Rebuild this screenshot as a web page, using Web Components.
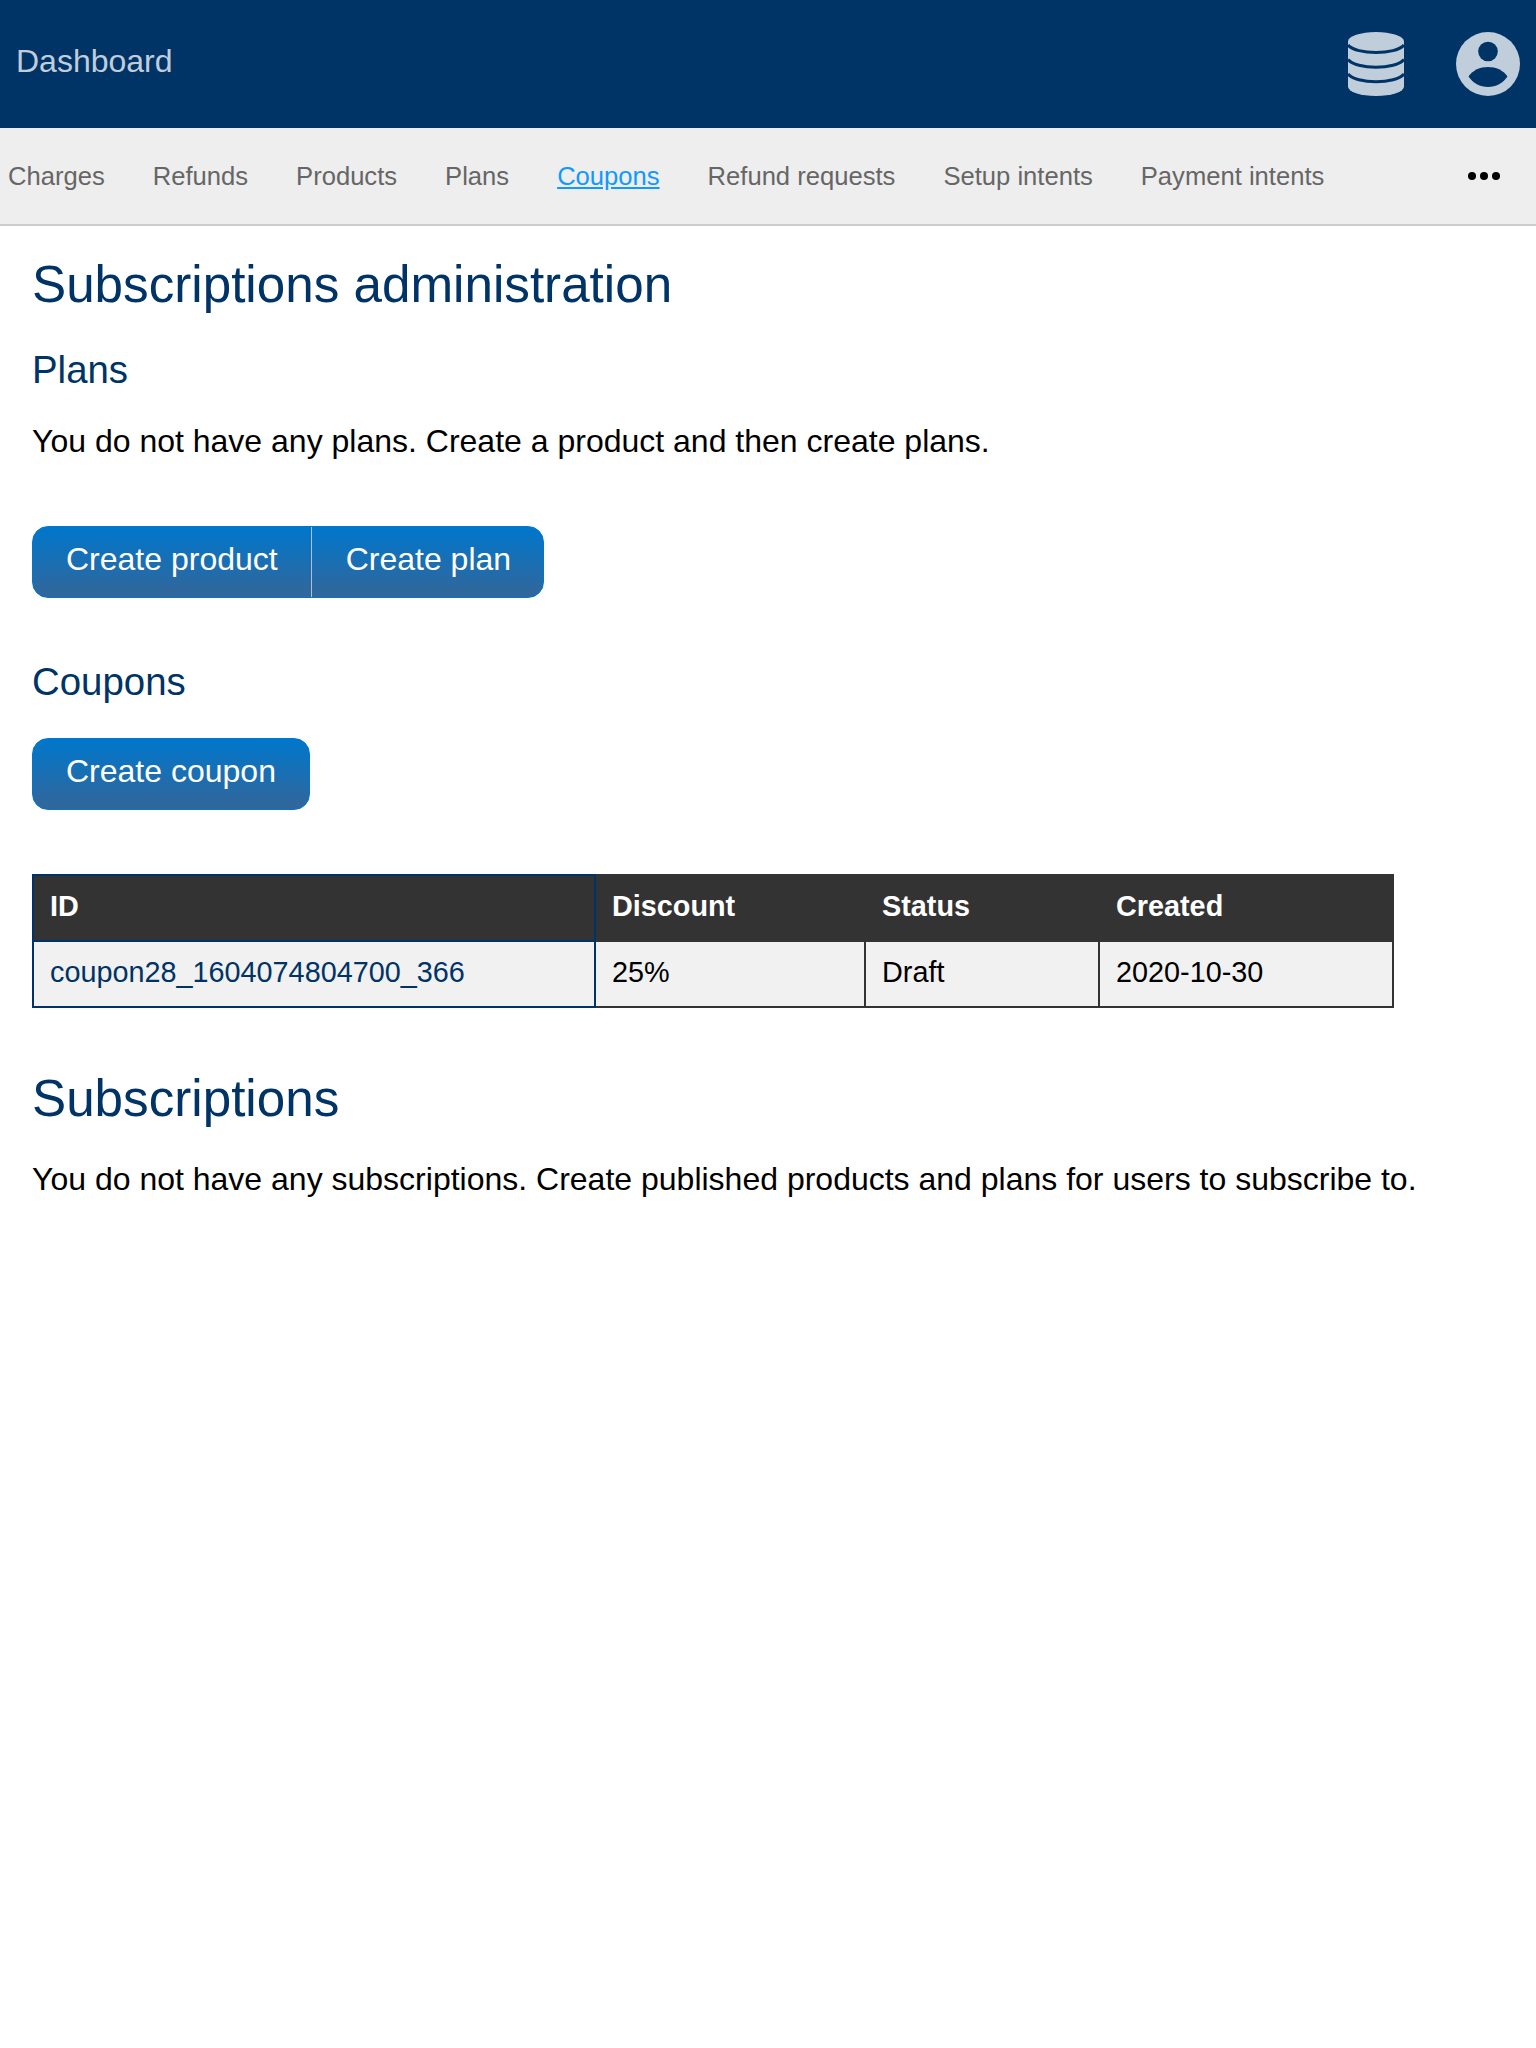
<!DOCTYPE html>
<html lang="en">
<head>
<meta charset="utf-8">
<title>Subscriptions administration</title>
<style>
  html, body { margin: 0; background: #fff; }
  body { font-family: "Liberation Sans", Arial, sans-serif; }
</style>
</head>
<body>
<admin-app></admin-app>
<script>
class TopBar extends HTMLElement {
  constructor() {
    super();
    this.attachShadow({ mode: 'open' });
  }

  connectedCallback() {
    this.shadowRoot.innerHTML = `
      <style>
        :host {
          display: flex;
          align-items: center;
          height: 128px;
          background: #003366;
          color: #bfccd9;
          padding: 0 16px;
          box-sizing: border-box;
        }
        .title { font-size: 32px; flex: 1; position: relative; top: -3px; color: #c0cddb; }
        .icons { display: flex; align-items: center; gap: 52px; }
        svg { display: block; fill: #c0cddb; }
      </style>
      <span class="title">Dashboard</span>
      <div class="icons">
        <svg width="56" height="64" viewBox="0 0 56 64">
          <path d="M0 9.5A28 9.5 0 0 1 56 9.5V54.5A28 9.5 0 0 1 0 54.5Z"/>
          <g fill="none" stroke="#003366" stroke-width="3">
            <path d="M0 13C4 18 16 20.5 28 20.5S52 18 56 13"/>
            <path d="M0 27.5C4 32.5 16 35.2 28 35.2S52 32.5 56 27.5"/>
            <path d="M0 42C4 47 16 49.7 28 49.7S52 47 56 42"/>
          </g>
        </svg>
        <svg width="64" height="64" viewBox="0 0 64 64">
          <circle cx="32" cy="32" r="32"/>
          <circle cx="32" cy="19.5" r="9.8" fill="#003366"/>
          <path d="M12.5 44.5C17 38 24 35 32 35S47 38 51.5 44.5C47 51 40 55 32 55S17 51 12.5 44.5Z" fill="#003366"/>
        </svg>
      </div>
    `;
  }
}
customElements.define('top-bar', TopBar);

class SubNav extends HTMLElement {
  constructor() {
    super();
    this.attachShadow({ mode: 'open' });
  }

  connectedCallback() {
    this.shadowRoot.innerHTML = `
      <style>
        :host {
          display: flex;
          align-items: center;
          height: 96px;
          background: #eeeeee;
          border-bottom: 2px solid #cccccc;
          padding: 0 36px 0 8px;
          font-size: 25.6px;
          color: #666666;
        }
        nav { display: flex; gap: 48px; flex: 1; }
        ::slotted(a) { color: #666666; text-decoration: none; }
        ::slotted(a.active) { color: #1199ff; text-decoration: underline; }
        svg { display: block; fill: #000; }
      </style>
      <nav><slot></slot></nav>
      <svg width="32" height="8" viewBox="0 0 32 8">
        <circle cx="4" cy="4" r="4"/><circle cx="16" cy="4" r="4"/><circle cx="28" cy="4" r="4"/>
      </svg>
    `;
  }
}
customElements.define('sub-nav', SubNav);

class BtnGroup extends HTMLElement {
  constructor() {
    super();
    this.attachShadow({ mode: 'open' });
  }

  connectedCallback() {
    this.shadowRoot.innerHTML = `
      <style>
        :host {
          display: inline-flex;
          height: 72px;
          box-sizing: border-box;
          border: 1px solid #0077cc;
          border-radius: 16px;
          overflow: hidden;
          background: linear-gradient(#0077cc, #336699);
          vertical-align: top;
        }
      </style>
      <slot></slot>
    `;
  }
}
customElements.define('btn-group', BtnGroup);

class ActionBtn extends HTMLElement {
  constructor() {
    super();
    this.attachShadow({ mode: 'open' });
  }

  connectedCallback() {
    this.shadowRoot.innerHTML = `
      <style>
        :host {
          display: flex;
          align-items: center;
          padding: 0 33px 6px;
          font-size: 32px;
          color: #ffffff;
        }
        :host(:not(:first-child)) {
          border-left: 1px solid #a9c2da;
          padding-left: 34px;
          padding-right: 32px;
        }
      </style>
      <slot></slot>
    `;
  }
}
customElements.define('action-btn', ActionBtn);

class CouponTable extends HTMLElement {
  constructor() {
    super();
    this.attachShadow({ mode: 'open' });
  }

  connectedCallback() {
    this.shadowRoot.innerHTML = `
      <style>
        :host { display: block; font-size: 28.8px; }
        table { border-collapse: collapse; table-layout: fixed; width: 1362px; }
        th, td { border: 2px solid #333333; padding: 0 16px; text-align: left; }
        th { background: #333333; color: #fff; height: 66px; font-weight: bold; padding-bottom: 3px; box-sizing: border-box; }
        td { background: #f1f1f1; color: #000; height: 66px; padding-bottom: 3px; box-sizing: border-box; }
        .id { border-color: #003366; }
        a { color: #003366; text-decoration: none; }
      </style>
      <table>
        <colgroup><col style="width:562px"><col style="width:270px"><col style="width:234px"><col></colgroup>
        <tr><th class="id">ID</th><th>Discount</th><th>Status</th><th>Created</th></tr>
        <tr><td class="id"><a>coupon28_1604074804700_366</a></td><td>25%</td><td>Draft</td><td>2020-10-30</td></tr>
      </table>
    `;
  }
}
customElements.define('coupon-table', CouponTable);

class AdminApp extends HTMLElement {
  constructor() {
    super();
    this.attachShadow({ mode: 'open' });
  }

  connectedCallback() {
    this.shadowRoot.innerHTML = `
      <style>
        :host { display: block; min-height: 2048px; font-family: "Liberation Sans", Arial, sans-serif; }
        main { padding: 0 32px; }
        h1, h2, p { margin: 0; font-weight: normal; }
        h1 { font-size: 51.2px; line-height: 60px; color: #003366; }
        h2 { font-size: 38.4px; line-height: 44px; color: #003366; }
        p { font-size: 32px; line-height: 40px; color: #000; }
        .h1a { margin-top: 29px; }
        .h2a { margin-top: 33px; }
        .p1 { margin-top: 29px; }
        .g1 { margin-top: 65px; }
        .h2b { margin-top: 62px; }
        .g2 { margin-top: 34px; }
        coupon-table { margin-top: 64px; }
        .h1b { margin-top: 61px; }
        .p2 { margin-top: 30px; }
        .g1, .g2 { height: 72px; }
      </style>
      <top-bar></top-bar>
      <sub-nav>
        <a>Charges</a><a>Refunds</a><a>Products</a><a>Plans</a><a class="active">Coupons</a>
        <a>Refund requests</a><a>Setup intents</a><a>Payment intents</a>
      </sub-nav>
      <main>
        <h1 class="h1a">Subscriptions administration</h1>
        <h2 class="h2a">Plans</h2>
        <p class="p1">You do not have any plans. Create a product and then create plans.</p>
        <div class="g1"><btn-group><action-btn>Create product</action-btn><action-btn>Create plan</action-btn></btn-group></div>
        <h2 class="h2b">Coupons</h2>
        <div class="g2"><btn-group><action-btn>Create coupon</action-btn></btn-group></div>
        <coupon-table></coupon-table>
        <h1 class="h1b">Subscriptions</h1>
        <p class="p2">You do not have any subscriptions. Create published products and plans for users to subscribe to.</p>
      </main>
    `;
  }
}
customElements.define('admin-app', AdminApp);
</script>
</body>
</html>
